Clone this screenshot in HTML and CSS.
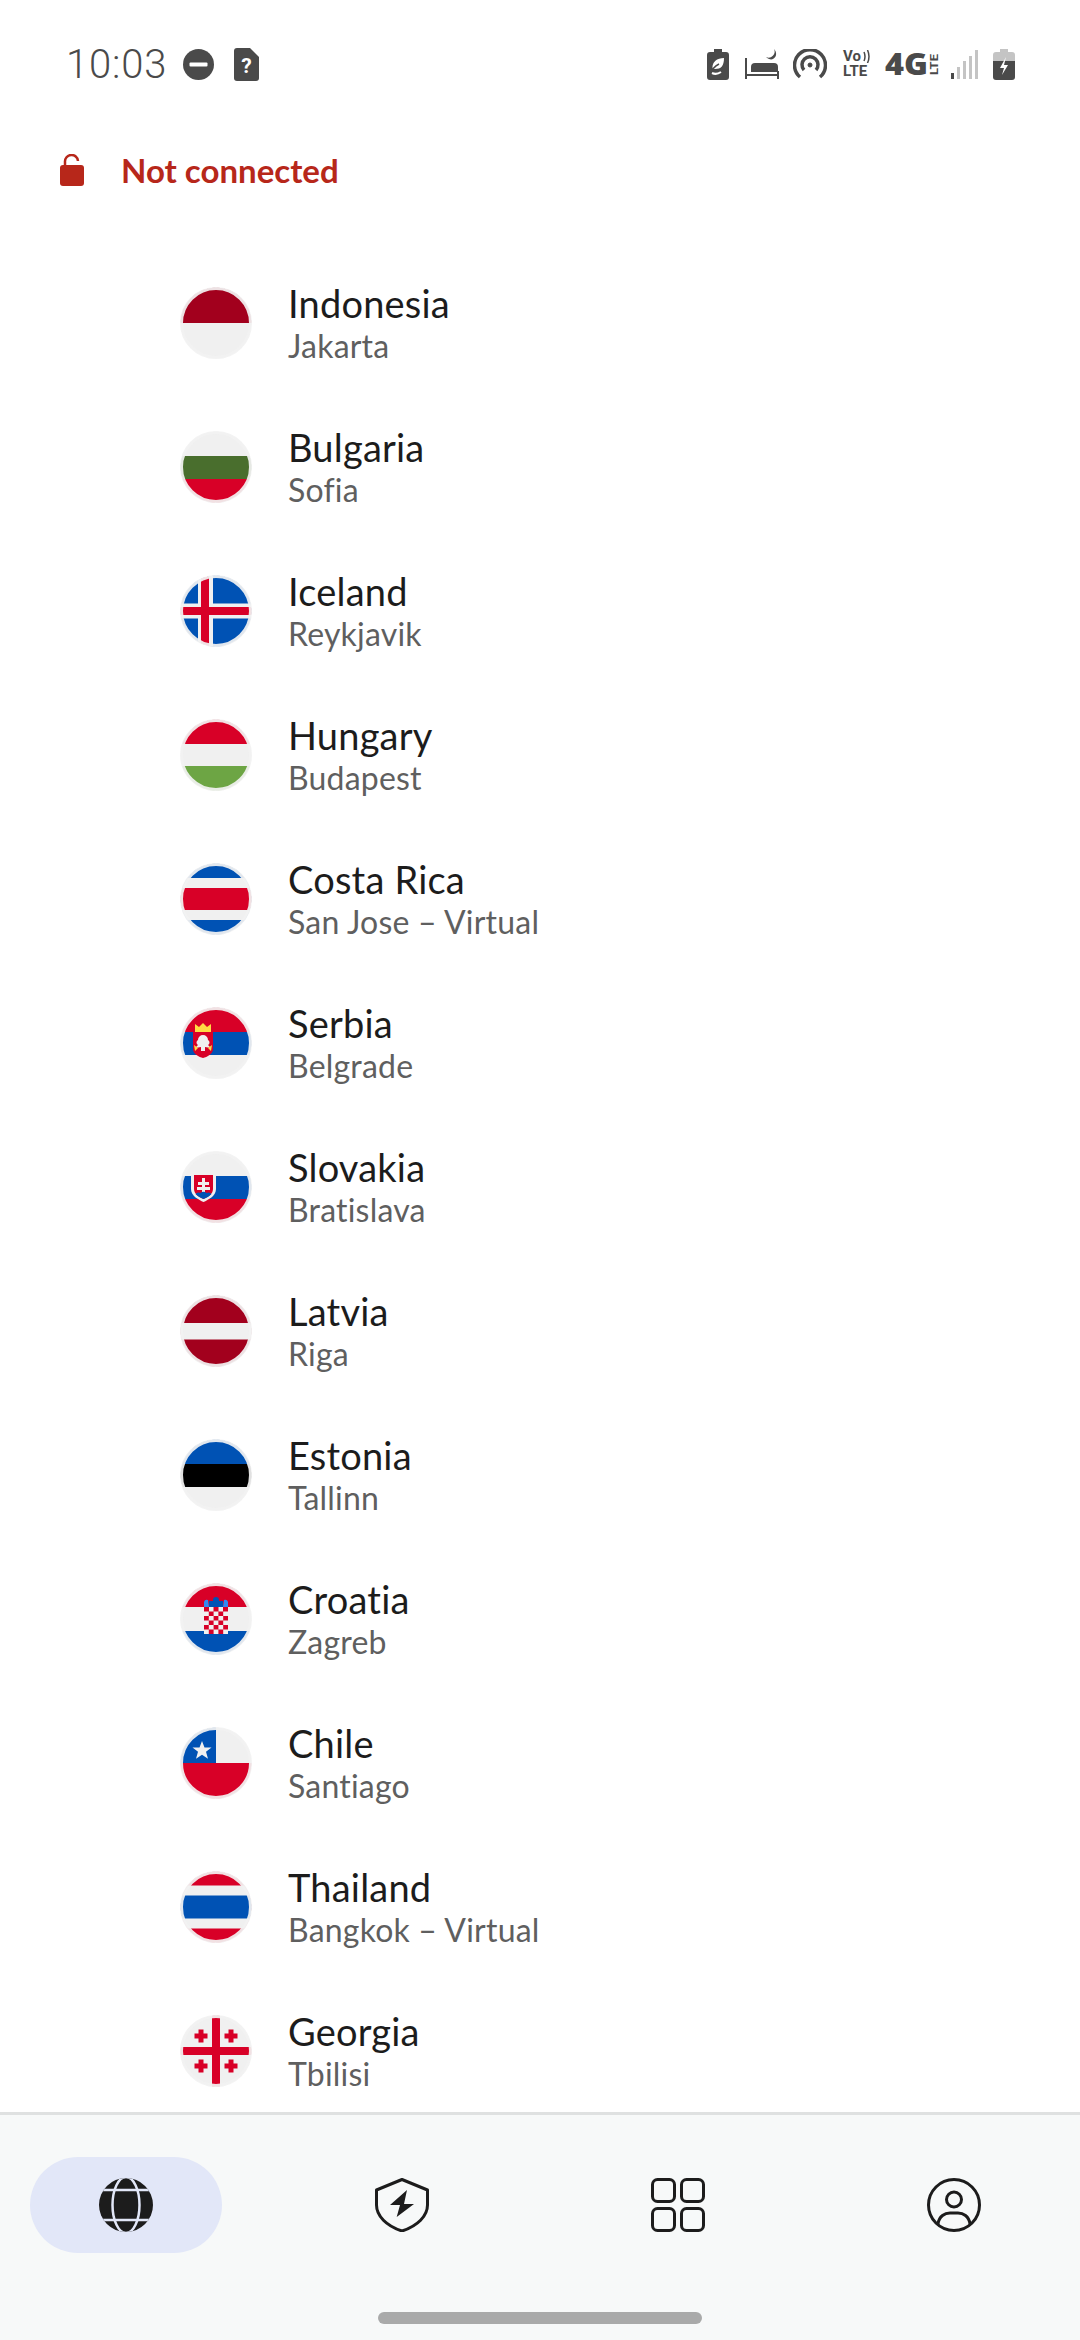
FILE: index.html
```html
<!DOCTYPE html>
<html lang="en">
<head>
    <meta charset="UTF-8">
    <meta name="viewport" content="width=device-width, initial-scale=1.0">
    <title>Locations</title>
    <link rel="stylesheet" href="styles.css">
</head>
<body>
    <svg class="defs" width="0" height="0">
        <defs>
            <clipPath id="disc"><circle cx="36" cy="36" r="35.400"/></clipPath>
        </defs>
    </svg>

    <div class="statusBar">
        <div class="statusLeft">
            <span class="time">10:03</span>
            <svg class="dnd" viewBox="0 0 31 31"><circle cx="15.5" cy="15.5" r="15.5" fill="#4a4a4a"/><rect x="6.5" y="13.5" width="18" height="4" rx="1" fill="#fff"/></svg>
            <svg class="sim" viewBox="0 0 25 33"><path d="M3 0h13l9 9v21a3 3 0 0 1-3 3H3a3 3 0 0 1-3-3V3a3 3 0 0 1 3-3z" fill="#4a4a4a"/><text x="12.5" y="25" class="simMark">?</text></svg>
        </div>
        <div class="statusRight">
            <svg class="ecoBattery" viewBox="0 0 22 31"><path d="M7 0h8v3h4a3 3 0 0 1 3 3v22a3 3 0 0 1-3 3H3a3 3 0 0 1-3-3V6a3 3 0 0 1 3-3h4z" fill="#4a4a4a"/><path d="M17 9c0 8-3 11-9 11-1 0-2 0-2.500-1C5 13 10 9 17 9z" fill="#fff"/><path d="M4 25c1-5 4-8 8-10" stroke="#4a4a4a" stroke-width="1.500" fill="none"/><path d="M5 24c2 1 6 1 9-1" stroke="#fff" stroke-width="2" fill="none"/></svg>
            <svg class="bed" viewBox="0 0 34 30"><path d="M1 9v21M33 22v8M1 26h32" stroke="#4a4a4a" stroke-width="2" fill="none"/><path d="M6 22v-4a4 4 0 0 1 4-4h19a4 4 0 0 1 4 4v5H6z" fill="#4a4a4a"/><path d="M29 0a6 6 0 0 1-8 8c2 2 5 3 7 2 4-2 4-7 1-10z" fill="#4a4a4a"/></svg>
            <svg class="hotspot" viewBox="0 0 34 30" fill="none" stroke="#4a4a4a" stroke-width="3.500"><path d="M7 28a15.500 15.500 0 1 1 20 0"/><path d="M11 21a8 8 0 1 1 12 0"/><circle cx="17" cy="16" r="2" fill="#4a4a4a" stroke-width="1"/></svg>
            <span class="volte"><span class="voRow">Vo<svg class="waves" viewBox="0 0 7 13" fill="none" stroke="#4a4a4a" stroke-width="1.500"><path d="M1 2q2 4.500 0 9M4.500 0q3 6.500 0 13"/></svg></span><span class="lteRow">LTE</span></span>
            <svg class="fourG" viewBox="0 0 54 22"><text x="0" y="22" class="fourGMain" textLength="43" lengthAdjust="spacingAndGlyphs">4G</text><text class="fourGLte" transform="translate(53 22) rotate(-90)" textLength="21" lengthAdjust="spacingAndGlyphs">LTE</text></svg>
            <svg class="signal" viewBox="0 0 27 29"><rect x="0" y="23" width="3" height="6" fill="#4a4a4a"/><rect x="6" y="17" width="3" height="12" fill="#c4c4c4"/><rect x="12" y="11" width="3" height="18" fill="#c4c4c4"/><rect x="18" y="6" width="3" height="23" fill="#c4c4c4"/><rect x="24" y="0" width="3" height="29" fill="#c4c4c4"/></svg>
            <svg class="chargeBattery" viewBox="0 0 22 31"><path d="M7 0h8v3h4a3 3 0 0 1 3 3v6H0V6a3 3 0 0 1 3-3h4z" fill="#c4c4c4"/><path d="M0 12h22v16a3 3 0 0 1-3 3H3a3 3 0 0 1-3-3z" fill="#4a4a4a"/><path d="M13 8l-6 11h4l-2 7 6-10h-4z" fill="#fff"/></svg>
        </div>
    </div>

    <div class="connection">
        <svg class="lock" viewBox="0 0 24 32"><path d="M5 14V8a6.500 6.500 0 0 1 13-1" fill="none" stroke="#b7271a" stroke-width="2.500"/><rect y="11" width="24" height="21" rx="3" fill="#b7271a"/></svg>
        <span class="connectionText">Not connected</span>
    </div>

    <div class="locationList">
        <div class="location">
            <svg class="flag" viewBox="0 0 72 72"><g clip-path="url(#disc)"><rect width="72" height="36" fill="#a2001d"/><rect y="36" width="72" height="36" fill="#f0f0f0"/></g><circle class="flagRing" cx="36" cy="36" r="34.500"/></svg>
            <div class="locationText"><div class="country">Indonesia</div><div class="city">Jakarta</div></div>
        </div>
        <div class="location">
            <svg class="flag" viewBox="0 0 72 72"><g clip-path="url(#disc)"><rect width="72" height="25" fill="#f0f0f0"/><rect y="25" width="72" height="23" fill="#496e2d"/><rect y="48" width="72" height="24" fill="#d80027"/></g><circle class="flagRing" cx="36" cy="36" r="34.500"/></svg>
            <div class="locationText"><div class="country">Bulgaria</div><div class="city withLigature">Sofia</div></div>
        </div>
        <div class="location">
            <svg class="flag" viewBox="0 0 72 72"><g clip-path="url(#disc)"><rect width="72" height="72" fill="#0052b4"/><rect x="18" width="15" height="72" fill="#f0f0f0"/><rect y="28.500" width="72" height="15" fill="#f0f0f0"/><rect x="21" width="8" height="72" fill="#d80027"/><rect y="32" width="72" height="8" fill="#d80027"/></g><circle class="flagRing" cx="36" cy="36" r="34.500"/></svg>
            <div class="locationText"><div class="country">Iceland</div><div class="city">Reykjavik</div></div>
        </div>
        <div class="location">
            <svg class="flag" viewBox="0 0 72 72"><g clip-path="url(#disc)"><rect width="72" height="25" fill="#d80027"/><rect y="25" width="72" height="22" fill="#f0f0f0"/><rect y="47" width="72" height="25" fill="#6da544"/></g><circle class="flagRing" cx="36" cy="36" r="34.500"/></svg>
            <div class="locationText"><div class="country">Hungary</div><div class="city">Budapest</div></div>
        </div>
        <div class="location">
            <svg class="flag" viewBox="0 0 72 72"><g clip-path="url(#disc)"><rect width="72" height="72" fill="#0052b4"/><rect y="15" width="72" height="42" fill="#f0f0f0"/><rect y="25" width="72" height="22" fill="#d80027"/></g><circle class="flagRing" cx="36" cy="36" r="34.500"/></svg>
            <div class="locationText"><div class="country">Costa Rica</div><div class="city">San Jose – Virtual</div></div>
        </div>
        <div class="location">
            <svg class="flag" viewBox="0 0 72 72"><g clip-path="url(#disc)"><rect width="72" height="25" fill="#d80027"/><rect y="25" width="72" height="23" fill="#0052b4"/><rect y="48" width="72" height="24" fill="#f0f0f0"/><path d="M15 25v-8l4 3 4-4 4 4 4-3v8z" fill="#ffda44"/><path d="M13 25h20v17c0 5-6 8-10 9-4-1-10-4-10-9z" fill="#d80027"/><path d="M23 28a5 5 0 0 1 5 5c2 1 2 4 0 5l3 3-6-1v4h-4v-4l-6 1 3-3c-2-1-2-4 0-5a5 5 0 0 1 5-5z" fill="#f0f0f0"/><path d="M14 38l4 3-3 3zM32 38l-4 3 3 3z" fill="#ffda44"/></g><circle class="flagRing" cx="36" cy="36" r="34.500"/></svg>
            <div class="locationText"><div class="country">Serbia</div><div class="city">Belgrade</div></div>
        </div>
        <div class="location">
            <svg class="flag" viewBox="0 0 72 72"><g clip-path="url(#disc)"><rect width="72" height="25" fill="#f0f0f0"/><rect y="25" width="72" height="23" fill="#0052b4"/><rect y="48" width="72" height="24" fill="#d80027"/><path d="M11 22h25v16c0 7-8 11-12.500 13C19 49 11 45 11 38z" fill="#f0f0f0"/><path d="M14 24h19v14c0 5-5 8-9.500 10C19 46 14 43 14 38z" fill="#d80027"/><path d="M22 27h3v4h4v3h-4v2h5v3h-5v5h-3v-5h-5v-3h5v-2h-4v-3h4z" fill="#f0f0f0"/><path d="M15.500 43a4 4 0 0 1 5-1 4 4 0 0 1 6 0 4 4 0 0 1 5 1c-2 2-5 4-8 5-3-1-6-3-8-5z" fill="#0052b4"/></g><circle class="flagRing" cx="36" cy="36" r="34.500"/></svg>
            <div class="locationText"><div class="country">Slovakia</div><div class="city">Bratislava</div></div>
        </div>
        <div class="location">
            <svg class="flag" viewBox="0 0 72 72"><g clip-path="url(#disc)"><rect width="72" height="72" fill="#a2001d"/><rect y="28" width="72" height="16.500" fill="#f0f0f0"/></g><circle class="flagRing" cx="36" cy="36" r="34.500"/></svg>
            <div class="locationText"><div class="country">Latvia</div><div class="city">Riga</div></div>
        </div>
        <div class="location">
            <svg class="flag" viewBox="0 0 72 72"><g clip-path="url(#disc)"><rect width="72" height="25" fill="#0052b4"/><rect y="25" width="72" height="23" fill="#000"/><rect y="48" width="72" height="24" fill="#f0f0f0"/></g><circle class="flagRing" cx="36" cy="36" r="34.500"/></svg>
            <div class="locationText"><div class="country">Estonia</div><div class="city">Tallinn</div></div>
        </div>
        <div class="location">
            <svg class="flag" viewBox="0 0 72 72"><g clip-path="url(#disc)"><rect width="72" height="24" fill="#d80027"/><rect y="24" width="72" height="24" fill="#f0f0f0"/><rect y="48" width="72" height="24" fill="#0052b4"/><path d="M24 24v-5a3 3 0 0 1 4-2l1 7zM43 24l1-7a3 3 0 0 1 4 2v5z" fill="#338af3"/><path d="M29 18h14v6H29zM33 24v-7a3 3 0 0 1 6 0v7z" fill="#0052b4"/><rect x="24" y="24" width="24" height="27" fill="#f0f0f0"/><path class="checker" d="M24 24h5v4.500h-5zM33.500 24h5v4.500h-5zM43 24h5v4.500h-5zM28.800 28.500h4.800V33h-4.800zM38.400 28.500h4.800V33h-4.800zM24 33h4.800v4.500H24zM33.600 33h4.800v4.500h-4.800zM43.200 33H48v4.500h-4.800zM28.800 37.500h4.800V42h-4.800zM38.400 37.500h4.800V42h-4.800zM24 42h4.800v4.500H24zM33.600 42h4.800v4.500h-4.800zM43.200 42H48v4.500h-4.800zM28.800 46.500h4.800V51h-4.800zM38.400 46.500h4.800V51h-4.800z" fill="#d80027"/></g><circle class="flagRing" cx="36" cy="36" r="34.500"/></svg>
            <div class="locationText"><div class="country">Croatia</div><div class="city">Zagreb</div></div>
        </div>
        <div class="location">
            <svg class="flag" viewBox="0 0 72 72"><g clip-path="url(#disc)"><rect width="72" height="36" fill="#f0f0f0"/><rect width="36" height="36" fill="#0052b4"/><rect y="36" width="72" height="36" fill="#d80027"/><path d="M22 14l2.500 6.500h7l-5.500 4.300 2 7-6-4-6 4 2-7-5.500-4.300h7z" fill="#f0f0f0"/></g><circle class="flagRing" cx="36" cy="36" r="34.500"/></svg>
            <div class="locationText"><div class="country">Chile</div><div class="city">Santiago</div></div>
        </div>
        <div class="location">
            <svg class="flag" viewBox="0 0 72 72"><g clip-path="url(#disc)"><rect width="72" height="72" fill="#d80027"/><rect y="14.500" width="72" height="43" fill="#f0f0f0"/><rect y="24.500" width="72" height="23" fill="#0052b4"/></g><circle class="flagRing" cx="36" cy="36" r="34.500"/></svg>
            <div class="locationText"><div class="country">Thailand</div><div class="city">Bangkok – Virtual</div></div>
        </div>
        <div class="location">
            <svg class="flag" viewBox="0 0 72 72"><g clip-path="url(#disc)"><rect width="72" height="72" fill="#f0f0f0"/><rect x="32" width="8" height="72" fill="#d80027"/><rect y="32" width="72" height="8" fill="#d80027"/><path d="M18.500 14.500h5v4h4v5h-4v4h-5v-4h-4v-5h4zM48.500 14.500h5v4h4v5h-4v4h-5v-4h-4v-5h4zM18.500 44.500h5v4h4v5h-4v4h-5v-4h-4v-5h4zM48.500 44.500h5v4h4v5h-4v4h-5v-4h-4v-5h4z" fill="#d80027"/></g><circle class="flagRing" cx="36" cy="36" r="34.500"/></svg>
            <div class="locationText"><div class="country">Georgia</div><div class="city">Tbilisi</div></div>
        </div>
    </div>

    <div class="bottomNav">
        <div class="navItems">
            <div class="navItem active">
                <svg class="navIcon" viewBox="0 0 54 54"><defs><clipPath id="globe"><circle cx="27" cy="27" r="27"/></clipPath></defs><g clip-path="url(#globe)"><rect width="54" height="54" fill="#1c1c1c"/><path d="M0 12h54M0 42h54" stroke="#e2e7f8" stroke-width="2.500"/><ellipse cx="27" cy="27" rx="13.500" ry="28" fill="none" stroke="#e2e7f8" stroke-width="2.500"/></g></svg>
            </div>
            <div class="navItem">
                <svg class="navIcon" viewBox="0 0 54 54"><path d="M27 1.500L52.500 12v15c0 11-10 21-25.500 26C11.500 48 1.500 38 1.500 27V12z" fill="none" stroke="#1c1c1c" stroke-width="3" stroke-linejoin="round"/><path d="M32 12L15 27h10l-3.300 12L39 26H29z" fill="#1c1c1c"/></svg>
            </div>
            <div class="navItem">
                <svg class="navIcon" viewBox="0 0 54 54" fill="none" stroke="#1c1c1c" stroke-width="3"><rect x="1.500" y="1.500" width="22" height="22" rx="5"/><rect x="30.500" y="1.500" width="22" height="22" rx="5"/><rect x="1.500" y="30.500" width="22" height="22" rx="5"/><rect x="30.500" y="30.500" width="22" height="22" rx="5"/></svg>
            </div>
            <div class="navItem">
                <svg class="navIcon" viewBox="0 0 54 54" fill="none" stroke="#1c1c1c" stroke-width="3"><circle cx="27" cy="27" r="25.500"/><circle cx="27" cy="21.500" r="7.500"/><path d="M11 46c1-8 7-11 12-11h8c5 0 11 3 12 11"/></svg>
            </div>
        </div>
        <div class="homeHandle"></div>
    </div>
</body>
</html>
```

FILE: styles.css
```css
html, body {
    margin: 0;
    padding: 0;
    height: 100%;
    background-color: #ffffff;
    font-family: "Lato", "Liberation Sans", sans-serif;
    font-variant-ligatures: none;
    overflow: hidden;
}

body {
    display: flex;
    flex-direction: column;
    height: 2340px;
}

.defs {
    position: absolute;
}

.statusBar {
    display: flex;
    justify-content: space-between;
    align-items: center;
    height: 64px;
    padding: 32px 65px 0 66px;
    flex-shrink: 0;
}

.statusLeft {
    display: flex;
    align-items: center;
}

.time {
    font-family: "Roboto", sans-serif;
    font-weight: 300;
    font-size: 40px;
    letter-spacing: 0.8px;
    color: #4a4a4a;
    margin-right: 16px;
}

.dnd {
    width: 31px;
    height: 31px;
    margin-right: 20px;
}

.sim {
    width: 25px;
    height: 33px;
}

.simMark {
    font-family: "Roboto", sans-serif;
    font-weight: 700;
    font-size: 21px;
    fill: #ffffff;
    text-anchor: middle;
}

.statusRight {
    display: flex;
    align-items: center;
}

.ecoBattery {
    width: 22px;
    height: 31px;
    margin-right: 16px;
}

.bed {
    width: 34px;
    height: 30px;
    margin-right: 14px;
}

.hotspot {
    width: 34px;
    height: 30px;
    margin-right: 16px;
}

.volte {
    display: flex;
    flex-direction: column;
    width: 31px;
    margin-right: 11px;
    font-family: "Roboto", sans-serif;
    font-weight: 700;
    font-size: 15px;
    line-height: 15px;
    color: #4a4a4a;
}

.voRow {
    display: flex;
    align-items: center;
    gap: 2px;
}

.waves {
    width: 7px;
    height: 13px;
}

.fourG {
    width: 54px;
    height: 22px;
    margin-right: 12px;
    overflow: visible;
}

.fourGMain {
    font-family: "Open Sans", sans-serif;
    font-weight: 800;
    font-size: 30px;
    fill: #4a4a4a;
}

.fourGLte {
    font-family: "Roboto", sans-serif;
    font-weight: 700;
    font-size: 10px;
    fill: #4a4a4a;
}

.signal {
    width: 27px;
    height: 29px;
    margin-right: 15px;
}

.chargeBattery {
    width: 22px;
    height: 31px;
}

.connection {
    display: flex;
    align-items: center;
    height: 36px;
    margin-top: 56px;
    padding-left: 60px;
    flex-shrink: 0;
}

.lock {
    width: 24px;
    height: 32px;
    margin-right: 37px;
}

.connectionText {
    font-weight: 700;
    font-size: 33px;
    color: #b7271a;
}

.locationList {
    flex: 1;
    min-height: 0;
    overflow: hidden;
    margin-top: 63px;
    padding-left: 180px;
}

.location {
    display: flex;
    align-items: center;
    height: 144px;
}

.flag {
    width: 72px;
    height: 72px;
    flex-shrink: 0;
    margin-right: 36px;
}

.flagRing {
    fill: none;
    stroke: #f2f2f2;
    stroke-width: 3;
    stroke-opacity: 0.93;
}

.locationText {
    padding-top: 4px;
}

.country {
    font-size: 38px;
    line-height: 42px;
    letter-spacing: 0.2px;
    color: #1c1c1c;
}

.city {
    font-size: 32px;
    line-height: 44px;
    letter-spacing: 0.2px;
    color: #5f5f5f;
}

.withLigature {
    font-variant-ligatures: normal;
}

.bottomNav {
    flex-shrink: 0;
    height: 228px;
    box-sizing: border-box;
    border-top: 3px solid #dfe1e1;
    background-color: #f7f9f9;
    display: flex;
    flex-direction: column;
}

.navItems {
    display: flex;
    justify-content: space-between;
    padding: 42px 30px 0;
}

.navItem {
    display: flex;
    justify-content: center;
    align-items: center;
    width: 192px;
    height: 96px;
    border-radius: 48px;
}

.navItem.active {
    background-color: #e2e7f8;
}

.navIcon {
    width: 54px;
    height: 54px;
}

.homeHandle {
    width: 324px;
    height: 12px;
    border-radius: 6px;
    background-color: #a9aaaa;
    margin: 59px auto 0;
}
```
